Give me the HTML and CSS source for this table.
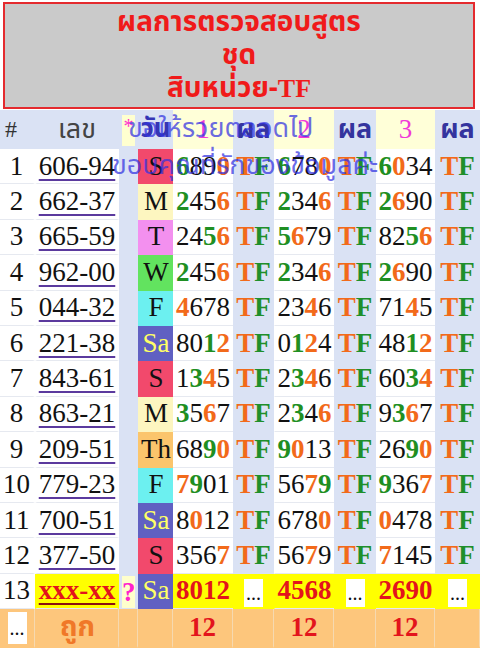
FILE: index.html
```html
<!DOCTYPE html>
<html lang="th">
<head>
<meta charset="utf-8">
<link rel="stylesheet" href="styles.css">
</head>
<body>
<div class="title">ผลการตรวจสอบสูตร<br>ชุด<br>สิบหน่วย-<span class="latin">TF</span></div>
<div class="board">
<table class="grid">
<colgroup>
<col class="c-idx"><col class="c-lek"><col class="c-star"><col class="c-day"><col class="c-n1"><col class="c-r1"><col class="c-n2"><col class="c-r2"><col class="c-n3"><col class="c-r3">
</colgroup>
<thead>
<tr>
<th class="h-hash">#</th><th class="h-lek">เลข</th><th class="h-star"><span class="starbox">*</span></th><th class="h-day">วัน</th><th class="h-n">1</th><th class="h-res">ผล</th><th class="h-n n2">2</th><th class="h-res">ผล</th><th class="h-n">3</th><th class="h-res">ผล</th>
</tr>
</thead>
<tbody>
<tr><td class="idx">1</td><td class="lek"><u>606-94</u></td><td class="star"></td><td class="day d-su">S</td><td class="num"><b class="g">6</b>89<b class="o">0</b></td><td class="res"><b class="t">T</b><b class="f">F</b></td><td class="num n2"><b class="g">6</b>78<b class="o">0</b></td><td class="res"><b class="t">T</b><b class="f">F</b></td><td class="num"><b class="g">6</b><b class="o">0</b>34</td><td class="res"><b class="t">T</b><b class="f">F</b></td></tr>
<tr><td class="idx">2</td><td class="lek"><u>662-37</u></td><td class="star"></td><td class="day d-mo">M</td><td class="num"><b class="g">2</b>45<b class="o">6</b></td><td class="res"><b class="t">T</b><b class="f">F</b></td><td class="num n2"><b class="g">2</b>34<b class="o">6</b></td><td class="res"><b class="t">T</b><b class="f">F</b></td><td class="num"><b class="g">2</b><b class="o">6</b>90</td><td class="res"><b class="t">T</b><b class="f">F</b></td></tr>
<tr><td class="idx">3</td><td class="lek"><u>665-59</u></td><td class="star"></td><td class="day d-tu">T</td><td class="num">24<b class="g">5</b><b class="o">6</b></td><td class="res"><b class="t">T</b><b class="f">F</b></td><td class="num n2"><b class="g">5</b><b class="o">6</b>79</td><td class="res"><b class="t">T</b><b class="f">F</b></td><td class="num">82<b class="g">5</b><b class="o">6</b></td><td class="res"><b class="t">T</b><b class="f">F</b></td></tr>
<tr><td class="idx">4</td><td class="lek"><u>962-00</u></td><td class="star"></td><td class="day d-we">W</td><td class="num"><b class="g">2</b>45<b class="o">6</b></td><td class="res"><b class="t">T</b><b class="f">F</b></td><td class="num n2"><b class="g">2</b>34<b class="o">6</b></td><td class="res"><b class="t">T</b><b class="f">F</b></td><td class="num"><b class="g">2</b><b class="o">6</b>90</td><td class="res"><b class="t">T</b><b class="f">F</b></td></tr>
<tr><td class="idx">5</td><td class="lek"><u>044-32</u></td><td class="star"></td><td class="day d-fr">F</td><td class="num"><b class="o">4</b>678</td><td class="res"><b class="t">T</b><b class="f">F</b></td><td class="num n2">23<b class="o">4</b>6</td><td class="res"><b class="t">T</b><b class="f">F</b></td><td class="num">71<b class="o">4</b>5</td><td class="res"><b class="t">T</b><b class="f">F</b></td></tr>
<tr><td class="idx">6</td><td class="lek"><u>221-38</u></td><td class="star"></td><td class="day d-sa">Sa</td><td class="num">80<b class="g">1</b><b class="o">2</b></td><td class="res"><b class="t">T</b><b class="f">F</b></td><td class="num n2">0<b class="g">1</b><b class="o">2</b>4</td><td class="res"><b class="t">T</b><b class="f">F</b></td><td class="num">48<b class="g">1</b><b class="o">2</b></td><td class="res"><b class="t">T</b><b class="f">F</b></td></tr>
<tr><td class="idx">7</td><td class="lek"><u>843-61</u></td><td class="star"></td><td class="day d-su">S</td><td class="num">1<b class="g">3</b><b class="o">4</b>5</td><td class="res"><b class="t">T</b><b class="f">F</b></td><td class="num n2">2<b class="g">3</b><b class="o">4</b>6</td><td class="res"><b class="t">T</b><b class="f">F</b></td><td class="num">60<b class="g">3</b><b class="o">4</b></td><td class="res"><b class="t">T</b><b class="f">F</b></td></tr>
<tr><td class="idx">8</td><td class="lek"><u>863-21</u></td><td class="star"></td><td class="day d-mo">M</td><td class="num"><b class="g">3</b>5<b class="o">6</b>7</td><td class="res"><b class="t">T</b><b class="f">F</b></td><td class="num n2">2<b class="g">3</b>4<b class="o">6</b></td><td class="res"><b class="t">T</b><b class="f">F</b></td><td class="num">9<b class="g">3</b><b class="o">6</b>7</td><td class="res"><b class="t">T</b><b class="f">F</b></td></tr>
<tr><td class="idx">9</td><td class="lek"><u>209-51</u></td><td class="star"></td><td class="day d-th">Th</td><td class="num">68<b class="g">9</b><b class="o">0</b></td><td class="res"><b class="t">T</b><b class="f">F</b></td><td class="num n2"><b class="g">9</b><b class="o">0</b>13</td><td class="res"><b class="t">T</b><b class="f">F</b></td><td class="num">26<b class="g">9</b><b class="o">0</b></td><td class="res"><b class="t">T</b><b class="f">F</b></td></tr>
<tr><td class="idx">10</td><td class="lek"><u>779-23</u></td><td class="star"></td><td class="day d-fr">F</td><td class="num"><b class="o">7</b><b class="g">9</b>01</td><td class="res"><b class="t">T</b><b class="f">F</b></td><td class="num n2">56<b class="o">7</b><b class="g">9</b></td><td class="res"><b class="t">T</b><b class="f">F</b></td><td class="num"><b class="g">9</b>36<b class="o">7</b></td><td class="res"><b class="t">T</b><b class="f">F</b></td></tr>
<tr><td class="idx">11</td><td class="lek"><u>700-51</u></td><td class="star"></td><td class="day d-sa">Sa</td><td class="num">8<b class="o">0</b>12</td><td class="res"><b class="t">T</b><b class="f">F</b></td><td class="num n2">678<b class="o">0</b></td><td class="res"><b class="t">T</b><b class="f">F</b></td><td class="num"><b class="o">0</b>478</td><td class="res"><b class="t">T</b><b class="f">F</b></td></tr>
<tr><td class="idx">12</td><td class="lek"><u>377-50</u></td><td class="star"></td><td class="day d-su">S</td><td class="num">356<b class="o">7</b></td><td class="res"><b class="t">T</b><b class="f">F</b></td><td class="num n2">56<b class="o">7</b>9</td><td class="res"><b class="t">T</b><b class="f">F</b></td><td class="num"><b class="o">7</b>145</td><td class="res"><b class="t">T</b><b class="f">F</b></td></tr>
<tr class="next"><td class="idx">13</td><td class="lek"><u>xxx-xx</u></td><td class="star"><span class="qbox">?</span></td><td class="day d-sa">Sa</td><td class="num">8012</td><td class="res"><span class="dots">...</span></td><td class="num n2">4568</td><td class="res"><span class="dots">...</span></td><td class="num">2690</td><td class="res"><span class="dots">...</span></td></tr>
<tr class="sum"><td class="idx"><span class="dots">...</span></td><td class="lek">ถูก</td><td class="star"></td><td class="day"></td><td class="num">12</td><td class="res"></td><td class="num n2">12</td><td class="res"></td><td class="num">12</td><td class="res"></td></tr>
</tbody>
</table>
<div class="marquee">
<div class="mq1">ขอให้รวยตลอดไป</div>
<div class="mq2">ขอบคุณที่รักของข้อมูลค่ะ</div>
</div>
</div>
</body>
</html>
```
FILE: styles.css
```css
body {
  margin: 0;
  background: #ffffff;
  font-family: "Liberation Serif", serif;
}

.title {
  margin: 2px 5px 0 3px;
  height: 107px;
  box-sizing: border-box;
  border: 2px solid #e42a2e;
  background: #cacaca;
  color: #f01a1a;
  font-family: "Noto Sans Thai", "Tahoma", sans-serif;
  font-weight: bold;
  font-size: 28px;
  line-height: 33px;
  text-align: center;
  padding-top: 2px;
}
.title .latin {
  font-family: "Liberation Serif", serif;
  font-size: 26px;
}

.board {
  position: relative;
  margin-top: 1px;
}

.grid {
  width: 480px;
  table-layout: fixed;
  border-collapse: separate;
  border-spacing: 0;
  background: #dae2f4;
  font-size: 27px;
  line-height: 31px;
  color: #111;
}

.c-idx { width: 35px; }
.c-lek { width: 84px; }
.c-star { width: 19px; }
.c-day { width: 35px; }
.c-n1 { width: 60px; }
.c-r1 { width: 41px; }
.c-n2 { width: 60px; }
.c-r2 { width: 42px; }
.c-n3 { width: 59px; }
.c-r3 { width: 45px; }

th, td {
  padding: 0;
  text-align: center;
  white-space: nowrap;
  background-clip: padding-box;
  border-bottom: 1px solid transparent;
}

thead tr { height: 39px; }
tbody tr { height: 35.4px; }

th {
  font-weight: normal;
  line-height: 30px;
  font-family: "Liberation Serif", "Noto Sans Thai", "Tahoma", serif;
}

.h-hash {
  text-align: left;
  padding-left: 5px;
  color: #333;
  font-size: 24px;
}
.h-lek {
  color: #444;
  font-size: 27px;
}
.h-star { vertical-align: middle; }
.starbox {
  display: inline-block;
  width: 13px;
  height: 31px;
  background: #ffffd0;
  color: #ff33cc;
  font-size: 20px;
  line-height: 22px;
  vertical-align: middle;
}
.h-day {
  color: #3535b5;
  font-weight: bold;
  font-size: 26px;
}
.h-n {
  background: #ffffd8;
  color: #f03ad8;
  font-size: 27px;
}
.h-res {
  color: #34349e;
  font-weight: bold;
  font-size: 27px;
}

.idx {
  background: #ffffff;
  border-right: 2px solid transparent;
  border-bottom-color: #e6e9f0;
}
.lek {
  background: #ffffff;
  border-left: 2px solid transparent;
  border-right: 2px solid transparent;
  border-bottom-color: #e6e9f0;
}
.lek u {
  text-decoration-color: #5b3a9e;
  text-decoration-thickness: 2px;
  text-underline-offset: 4px;
}
.day {
  border-left: 1px solid transparent;
}
.d-su { background: #f2496c; }
.d-mo { background: #fdf6c0; }
.d-tu { background: #f390ef; }
.d-we { background: #62e35f; }
.d-th { background: #fbc56c; }
.d-fr { background: #6cf0f0; }
.d-sa { background: #6060c2; color: #ffff66; }

.num {
  background: #ffffff;
  border-bottom-color: #e6e9f0;
}
.num.n2 { border-left: 1px solid transparent; }

.g { color: #1f8f22; }
.o { color: #f26a1a; }
.t { color: #f26a1a; }
.f { color: #1f8f2a; }

.next .lek, .next .num, .next .res { background: #ffff00; }
.next .lek u {
  color: #e3141c;
  font-weight: bold;
  text-decoration-color: #8a1010;
}
.next .num { color: #e3141c; font-weight: bold; }
.qbox {
  display: inline-block;
  width: 13px;
  height: 32px;
  background: #ffffcc;
  color: #ff22cc;
  font-weight: bold;
  line-height: 32px;
  vertical-align: middle;
}
.dots {
  display: inline-block;
  background: #ffffff;
  color: #111;
  font-size: 20px;
  line-height: 28px;
  padding: 0 2px;
  vertical-align: middle;
}

.sum { height: 39px; }
.sum td {
  background: #fdc67c;
  border-right: 1px solid #f6d9b0;
  border-bottom: 2px solid transparent;
}
.sum .dots { line-height: 32px; }
.sum .lek {
  color: #f07828;
  font-weight: bold;
  font-size: 28px;
  line-height: 30px;
  font-family: "Noto Sans Thai", "Tahoma", sans-serif;
}
.sum .num { color: #e3141c; font-weight: bold; }

.marquee {
  position: absolute;
  left: 0;
  top: 0;
  pointer-events: none;
  font-family: "Noto Sans Thai", "Tahoma", sans-serif;
  font-size: 27px;
  color: rgba(50, 50, 225, 0.72);
  line-height: 37px;
}
.mq1 { margin-left: 128px; }
.mq2 { margin-left: 112px; }
```
